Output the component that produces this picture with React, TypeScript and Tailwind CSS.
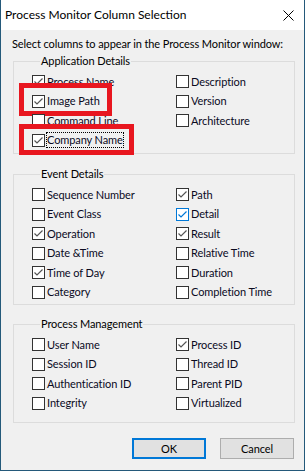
import React from "react";

type Item = { label: string; checked?: boolean; hot?: boolean; focus?: boolean; red?: "a" | "b" };

function Check({ checked, hot }: { checked?: boolean; hot?: boolean }) {
  return (
    <div
      className={
        "w-[13px] h-[13px] shrink-0 bg-white border flex items-center justify-center " +
        (hot ? "border-[#0078d7]" : "border-[#333333]")
      }
    >
      {checked && (
        <svg width="11" height="11" viewBox="0 0 11 11">
          <path
            d="M1.5 5.5 L4 8 L9.5 2.5"
            fill="none"
            stroke={hot ? "#0078d7" : "#555555"}
            strokeWidth="1.2"
          />
        </svg>
      )}
    </div>
  );
}

function Row({ item }: { item: Item }) {
  return (
    <div className="relative h-[19.5px] flex items-center">
      <Check checked={item.checked} hot={item.hot} />
      <span
        className={
          "ml-[2px] leading-[14px] text-[#0a0a1e] whitespace-nowrap " +
          (item.focus ? "outline outline-1 outline-dotted outline-black" : "")
        }
      >
        {item.label}
      </span>
      {item.red === "a" && (
        <div className="absolute left-[-13px] top-[-9px] w-[93px] h-[33px] border-[5px] border-[#e8161f] pointer-events-none" />
      )}
      {item.red === "b" && (
        <div className="absolute left-[-13px] top-[-7px] w-[115px] h-[31px] border-[5px] border-[#e8161f] pointer-events-none" />
      )}
    </div>
  );
}

function Group({
  title,
  left,
  right,
  className,
}: {
  title: string;
  left: Item[];
  right: Item[];
  className: string;
}) {
  return (
    <fieldset className={"border border-[#dcdcdc] mx-[12px] w-[282px] pl-[18px] " + className}>
      <legend className="ml-[8px] px-[1px] leading-[14px] text-black">{title}</legend>
      <div className="flex">
        <div className="w-[144px] flex flex-col">
          {left.map((it) => (
            <Row key={it.label} item={it} />
          ))}
        </div>
        <div className="flex flex-col">
          {right.map((it) => (
            <Row key={it.label} item={it} />
          ))}
        </div>
      </div>
    </fieldset>
  );
}

export default function App() {
  return (
    <div
      className="w-[305px] h-[471px] flex flex-col bg-[#f0f0f0] border-l border-r border-b border-[#24597a] text-[11px] tracking-[-0.1px] overflow-hidden"
      style={{ fontFamily: 'Lato, "Segoe UI", sans-serif' }}
    >
      <div className="h-[30px] bg-white flex items-center justify-between pl-[4px] pr-[10px] shrink-0">
        <span className="text-black text-[12px] tracking-normal">Process Monitor Column Selection</span>
        <svg width="11" height="11" viewBox="0 0 11 11">
          <path d="M0.5 0.5 L10.5 10.5 M10.5 0.5 L0.5 10.5" stroke="#000" strokeWidth="1" />
        </svg>
      </div>
      <div className="flex flex-col">
        <div className="pl-[11px] mt-[6px] leading-[16px] text-black whitespace-nowrap">
          Select columns to appear in the Process Monitor window:
        </div>
        <Group
          title="Application Details"
          className="mt-[2px] h-[100px] pt-[4px]"
          left={[
            { label: "Process Name", checked: true },
            { label: "Image Path", checked: true, red: "a" },
            { label: "Command Line" },
            { label: "Company Name", checked: true, focus: true, red: "b" },
          ]}
          right={[{ label: "Description" }, { label: "Version" }, { label: "Architecture" }]}
        />
        <Group
          title="Event Details"
          className="mt-[13px] h-[138px] pt-[4px]"
          left={[
            { label: "Sequence Number" },
            { label: "Event Class" },
            { label: "Operation", checked: true },
            { label: "Date &Time" },
            { label: "Time of Day", checked: true },
            { label: "Category" },
          ]}
          right={[
            { label: "Path", checked: true },
            { label: "Detail", checked: true, hot: true },
            { label: "Result", checked: true },
            { label: "Relative Time" },
            { label: "Duration" },
            { label: "Completion Time" },
          ]}
        />
        <Group
          title="Process Management"
          className="mt-[12px] h-[106px] pt-[4px]"
          left={[
            { label: "User Name" },
            { label: "Session ID" },
            { label: "Authentication ID" },
            { label: "Integrity" },
          ]}
          right={[
            { label: "Process ID", checked: true },
            { label: "Thread ID" },
            { label: "Parent PID" },
            { label: "Virtualized" },
          ]}
        />
        <div className="flex justify-end gap-[14px] pr-[10px] mt-[15px]">
          <button className="w-[74px] h-[21px] bg-[#e1e1e1] border-2 border-[#0078d7] text-black text-[11px] leading-none">
            OK
          </button>
          <button className="w-[74px] h-[21px] bg-[#e1e1e1] border border-[#adadad] text-black text-[11px] leading-none">
            Cancel
          </button>
        </div>
      </div>
    </div>
  );
}
